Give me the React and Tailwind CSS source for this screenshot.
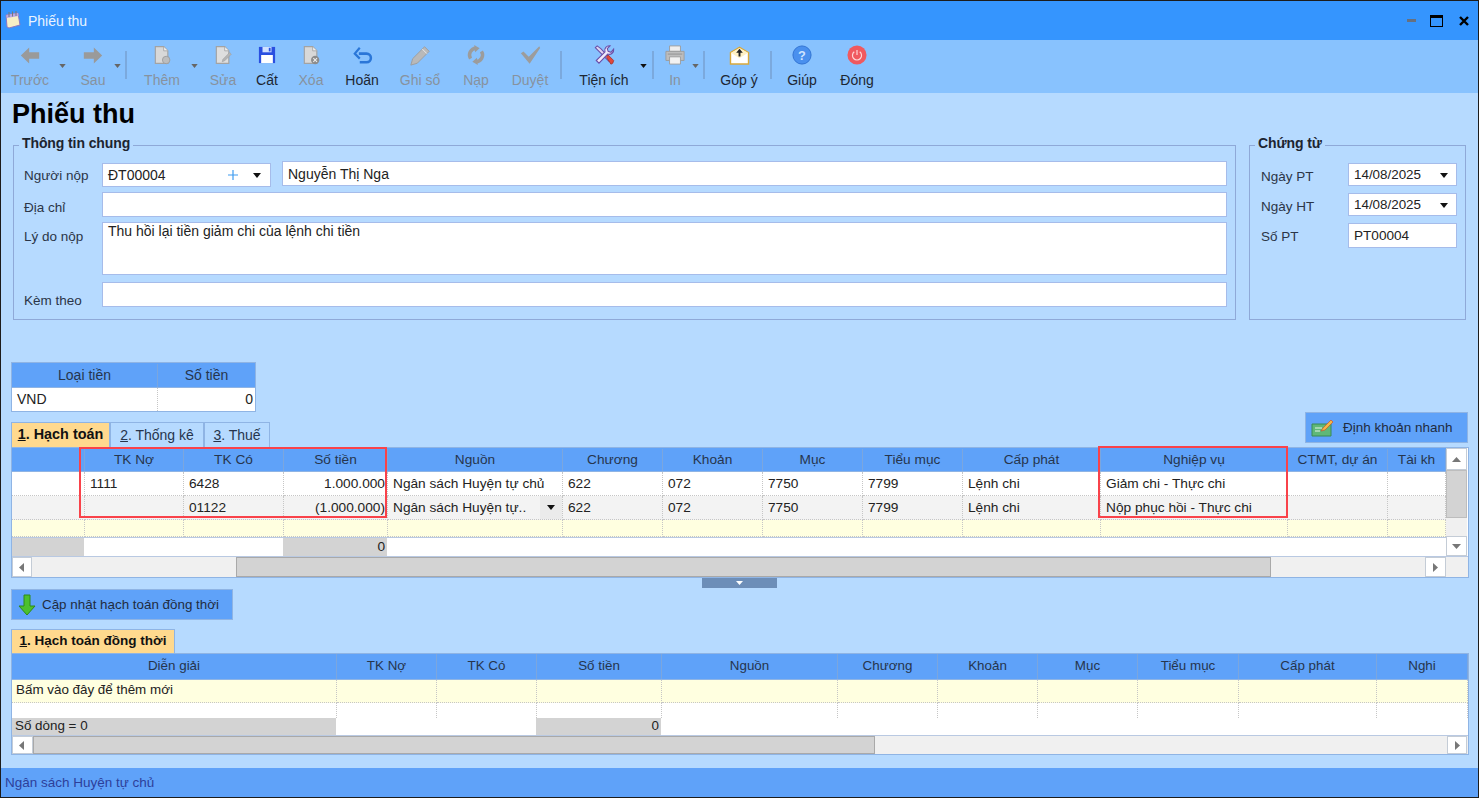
const F = { fontFamily: '"Liberation Sans", Arial, sans-serif' };

const Caret = ({ dark, small }) => (
  <svg width={small ? 7 : 8} height={small ? 4 : 5} viewBox="0 0 8 5"><path d="M0 0h8L4 5z" fill={dark ? "#111" : "#666"} /></svg>
);

const doc = "M4 2h10l5 5v15H4z";
const I = {
  back: <svg width="20" height="19" viewBox="0 0 24 24" preserveAspectRatio="none"><path d="M1 12 11 2v6h12v8H11v6z" fill="#9a9a9a" /></svg>,
  next: <svg width="20" height="19" viewBox="0 0 24 24" preserveAspectRatio="none"><path d="M23 12 13 2v6H1v8h12v6z" fill="#9a9a9a" /></svg>,
  add: <svg width="20" height="20" viewBox="0 0 24 24"><path d={doc} fill="#d8d8d8" stroke="#a3a3a3" strokeWidth="1.4" /><path d="M14 2v5h5" fill="#f0f0f0" stroke="#a3a3a3" /><circle cx="17" cy="18" r="4.5" fill="#bdbdbd" stroke="#9a9a9a" /></svg>,
  edit: <svg width="20" height="20" viewBox="0 0 24 24"><path d={doc} fill="#dedede" stroke="#a3a3a3" strokeWidth="1.4" /><path d="M14 2v5h5" fill="#f0f0f0" stroke="#a3a3a3" /><path d="m11 20 1-3 8-8 2 2-8 8z" fill="#b5b5b5" stroke="#999" strokeWidth=".6" /></svg>,
  save: <svg width="18" height="18" viewBox="0 0 20 20"><path d="M1 1h18v18H1z" fill="#2a4fe0" /><path d="M5 1h10v6H5z" fill="#cfe0ff" /><path d="M12 2h2v4h-2z" fill="#2a4fe0" /><path d="M3.500 10h13v9h-13z" fill="#fff" /></svg>,
  del: <svg width="20" height="20" viewBox="0 0 24 24"><path d={doc} fill="#d8d8d8" stroke="#a3a3a3" strokeWidth="1.4" /><path d="M14 2v5h5" fill="#f0f0f0" stroke="#a3a3a3" /><circle cx="17" cy="18" r="5" fill="#8c8c8c" /><path d="m14.800 15.800 4.400 4.400m0-4.400-4.400 4.400" stroke="#eee" strokeWidth="1.300" /></svg>,
  undo: <svg width="21" height="20" viewBox="0 0 22 22" fill="none"><path d="M7 9.500h8.500a4.500 4.500 0 0 1 0 9.500H8" stroke="#2a76d8" strokeWidth="2.800" /><path d="M8 3 2.500 9.500 8 15" stroke="#2a76d8" strokeWidth="2.400" /></svg>,
  pencil: <svg width="22" height="22" viewBox="0 0 24 24"><path d="m2 23 2-7L17 3l5 5L9 21z" fill="#b9b9b9" stroke="#9c9c9c" /><path d="m14.500 5.500 5 5" stroke="#eee" /></svg>,
  reload: <svg width="20" height="20" viewBox="0 0 22 22" fill="none" stroke="#9c9c9c" strokeWidth="3.800"><path d="M5 15a7.500 7.500 0 0 1 6-11.500" /><path d="M17 7a7.500 7.500 0 0 1-6 11.500" /><path d="M9 0 15 3.500 10 8z" fill="#9c9c9c" stroke="none" /><path d="M13 22 7 18.500 12 14z" fill="#9c9c9c" stroke="none" /></svg>,
  check: <svg width="21" height="18" viewBox="0 0 24 20"><path d="M1 8 4 6l6 6L22 0l1 2-12 18z" fill="#9c9c9c" /></svg>,
  tools: <svg width="23" height="22" viewBox="0 0 24 24"><path d="m2 4 2-2 4 3 11 12-2 2L6 8z" fill="#dfd9f3" stroke="#6a4ea8" strokeWidth="1.100" /><path d="m14 14 2-2 6 6-1 3-2 1z" fill="#e0483c" stroke="#9f2a22" strokeWidth=".8" /><path d="M22 5.500a5 5 0 0 1-6.500 5.500L6 21l-3-3 9.500-9.500A5 5 0 0 1 18 2l-3 3 1 3 3 1z" fill="#efeafb" stroke="#6a4ea8" strokeWidth="1.200" /></svg>,
  print: <svg width="20" height="20" viewBox="0 0 22 22"><path d="M5 1h12v6H5z" fill="#eee" stroke="#9c9c9c" /><path d="M1 7h20v10H1z" fill="#bdbdbd" stroke="#9c9c9c" /><path d="M5 13h12v8H5z" fill="#f2f2f2" stroke="#9c9c9c" /><path d="M3 10h16" stroke="#8e8e8e" /></svg>,
  mail: <svg width="21" height="19" viewBox="0 0 22 20"><path d="M1.500 7 11 1.500 20.500 7v12h-19z" fill="#fff" stroke="#d9a93c" strokeWidth="1.500" /><path d="M2 7 11 2l9 5-9 6z" fill="#fff1c4" /><path d="M11 3 7.500 7H10v4h2V7h2.500z" fill="#222" /></svg>,
  help: <svg width="20" height="20" viewBox="0 0 22 22"><circle cx="11" cy="11" r="10" fill="#4a90ee" stroke="#2e6fd0" /><text x="11" y="16" textAnchor="middle" fontSize="14" fontWeight="700" fill="#cfe4ff" style={F}>?</text></svg>,
  power: <svg width="20" height="20" viewBox="0 0 22 22" fill="none"><circle cx="11" cy="11" r="10.500" fill="#f0595f" /><path d="M8 7.500a5 5 0 1 0 6 0" stroke="#ffd5d6" strokeWidth="1.300" /><path d="M11 5.500v5.500" stroke="#ffd5d6" strokeWidth="1.300" /></svg>,
};

function Tool({ cls, icon, label, on, caret, dark }) {
  return (
    <div className={`relative flex flex-col items-center shrink-0 ${cls}`}>
      <div className="h-[30px] flex items-center justify-center">{icon}</div>
      <div className={`mt-[2px] text-[14px] leading-[16px] whitespace-nowrap ${on ? "text-[#1d2733]" : "text-[#87929f]"}`}>{label}</div>
      {caret && <div className={`absolute top-[24px] flex ${caret}`}><Caret dark={dark} small /></div>}
    </div>
  );
}
const Sep = ({ cls }) => <div className={`w-[2px] h-[28px] mt-[11px] bg-[#7ba9dd] shrink-0 ${cls}`} />;

const Field = ({ cls, children }) => (
  <div className={`bg-white border border-[#a6bcea] text-[#222] px-[5px] flex items-center shrink-0 ${cls}`}>{children}</div>
);
const Label = ({ cls, children }) => <div className={`text-[13.500px] leading-[16px] text-[#2b3547] shrink-0 ${cls}`}>{children}</div>;

const Arrow = ({ d, cls }) => (
  <div className={`bg-white border border-[#c4ccd6] flex items-center justify-center shrink-0 ${cls}`}>
    <svg width="9" height="9" viewBox="0 0 9 9"><path d={d} fill="#777" /></svg>
  </div>
);

const Cell = ({ cls, children, right }) => (
  <div className={`shrink-0 h-full pl-[5px] flex items-center border-r border-b border-dotted border-[#c6c6c6] whitespace-nowrap overflow-hidden ${right ? "justify-end pr-[2px]" : "pr-[5px]"} ${cls}`}>{children}</div>
);

const top = ["w-[73px]", "w-[99px]", "w-[100px]", "w-[104px]", "w-[175px]", "w-[100px]", "w-[100px]", "w-[100px]", "w-[100px]", "w-[138px]", "w-[187px]", "w-[100px]", "w-[58px]"];
const topHead = ["", "TK Nợ", "TK Có", "Số tiền", "Nguồn", "Chương", "Khoản", "Mục", "Tiểu mục", "Cấp phát", "Nghiệp vụ", "CTMT, dự án", "Tài kh"];
const r1 = ["", "1111", "6428", "1.000.000", "Ngân sách Huyện tự chủ", "622", "072", "7750", "7799", "Lệnh chi", "Giảm chi - Thực chi", "", ""];
const r2 = ["", "", "01122", "(1.000.000)", "Ngân sách Huyện tự..", "622", "072", "7750", "7799", "Lệnh chi", "Nộp phục hồi - Thực chi", "", ""];

const bot = ["w-[325px]", "w-[100px]", "w-[100px]", "w-[125px]", "w-[176px]", "w-[100px]", "w-[100px]", "w-[100px]", "w-[101px]", "w-[138px]", "w-[91px]"];
const botHead = ["Diễn giải", "TK Nợ", "TK Có", "Số tiền", "Nguồn", "Chương", "Khoản", "Mục", "Tiểu mục", "Cấp phát", "Nghi"];

const Head = ({ w, labels, h }) => (
  <div className={`flex bg-[#5fa2f9] border-b border-[#8fb4e4] text-[#26354d] ${h}`}>
    {labels.map((t, i) => (
      <div key={i} className={`shrink-0 h-full flex items-center justify-center border-r border-[#7ba6de] overflow-hidden whitespace-nowrap ${w[i]}`}>{t}</div>
    ))}
  </div>
);

const Tab = ({ cls, n, rest, on }) => (
  <div className={`h-[25px] flex items-center justify-center shrink-0 border border-b-0 border-[#8fb4e4] ${on ? "bg-[#ffd98e] font-bold text-[#111]" : "bg-[#b6daff] text-[#26354d]"} ${cls}`}>
    <span className="underline">{n}</span>{rest}
  </div>
);

export default function App() {
  return (
    <div className="w-[1481px] h-[799px] bg-white overflow-hidden" style={F}>
      <div className="w-[1479px] h-[798px] border border-[#1c1c1c] flex flex-col bg-[#b6daff]">
        {/* title bar */}
        <div className="h-[39px] bg-[#3595fe] flex items-center shrink-0 pl-[4px]">
          <svg width="16" height="18" viewBox="0 0 16 18" className="mb-[1px]">
            <path d="M1 4 13 2l2 12-11 3-2-1z" fill="#f6eec6" stroke="#8a77c4" />
            <path d="M1.500 4 13 2l.5 3-11.500 2z" fill="#b9a7e6" />
            <path d="M4 1v5M7.500 .5v5M11 0v5" stroke="#777" strokeWidth="1" />
          </svg>
          <span className="ml-[7px] text-[14px] text-[#eaf4ff] leading-none">Phiếu thu</span>
          <div className="ml-auto flex items-center pr-[9px]">
            <div className="w-[9px] h-[3px] bg-[#67707f]" />
            <div className="ml-[14px] w-[13px] h-[12px] border border-black border-t-[3px]" />
            <svg width="10" height="10" viewBox="0 0 10 10" className="ml-[16px]"><path d="m1 1 8 8m0-8-8 8" stroke="#000" strokeWidth="2.400" /></svg>
          </div>
        </div>

        {/* toolbar */}
        <div className="h-[53px] bg-[#88c2fe] flex items-start shrink-0 pl-[3px]">
          <Tool cls="w-[52px]" icon={I.back} label="Trước" caret="left-[55px]" />
          <Tool cls="w-[44px] ml-[15px]" icon={I.next} label="Sau" caret="left-[43px]" />
          <Sep cls="ml-[10px]" />
          <Tool cls="w-[50px] ml-[10px]" icon={I.add} label="Thêm" caret="left-[54px]" />
          <Tool cls="w-[40px] ml-[16px]" icon={I.edit} label="Sửa" />
          <Tool cls="w-[40px] ml-[4px]" icon={I.save} label="Cất" on />
          <Tool cls="w-[40px] ml-[4px]" icon={I.del} label="Xóa" />
          <Tool cls="w-[48px] ml-[7px]" icon={I.undo} label="Hoãn" on />
          <Tool cls="w-[52px] ml-[8px]" icon={I.pencil} label="Ghi sổ" />
          <Tool cls="w-[44px] ml-[8px]" icon={I.reload} label="Nạp" />
          <Tool cls="w-[48px] ml-[8px]" icon={I.check} label="Duyệt" />
          <Sep cls="ml-[6px]" />
          <Tool cls="w-[60px] ml-[12px]" icon={I.tools} label="Tiện ích" on caret="left-[66px]" dark />
          <Sep cls="ml-[18px]" />
          <Tool cls="w-[30px] ml-[6px]" icon={I.print} label="In" caret="left-[32px]" />
          <Sep cls="ml-[13px]" />
          <Tool cls="w-[50px] ml-[9px]" icon={I.mail} label="Góp ý" on />
          <Sep cls="ml-[6px]" />
          <Tool cls="w-[40px] ml-[10px]" icon={I.help} label="Giúp" on />
          <Tool cls="w-[44px] ml-[13px]" icon={I.power} label="Đóng" on />
        </div>

        {/* content */}
        <div className="flex-1 min-h-0 flex flex-col">
          <div className="h-[42px] pl-[11px] pt-[5px] shrink-0 text-[27px] leading-[32px] font-bold text-black">Phiếu thu</div>

          <div className="flex shrink-0 pl-[12px] text-[14px]">
            <fieldset className="w-[1223px] h-[185px] border border-[#8fa9d8] min-w-0 pl-[10px] pb-0">
              <legend className="-ml-[5px] px-[3px] pb-[4px] text-[14px] tracking-[-0.1px] leading-[16px] font-bold text-[#1c2430]">Thông tin chung</legend>
              <div className="flex mt-[6px]">
                <Label cls="w-[78px] pt-[7px]">Người nộp</Label>
                <Field cls="w-[169px] h-[24px] mt-[2px] pr-[9px] justify-between">
                  <span>ĐT00004</span>
                  <span className="flex items-center">
                    <svg width="10" height="10" viewBox="0 0 10 10"><path d="M5 0v10M0 5h10" stroke="#3f9cf0" strokeWidth="1.200" /></svg>
                    <span className="ml-[15px] flex"><Caret dark /></span>
                  </span>
                </Field>
                <Field cls="w-[945px] h-[25px] ml-[11px] pt-[2px]">Nguyễn Thị Nga</Field>
              </div>
              <div className="flex mt-[5px]">
                <Label cls="w-[78px] pt-[8px]">Địa chỉ</Label>
                <Field cls="w-[1125px] h-[25px]" />
              </div>
              <div className="flex mt-[5px]">
                <Label cls="w-[78px] pt-[7px]">Lý do nộp</Label>
                <Field cls="w-[1125px] h-[53px] !items-start leading-[16px]">Thu hồi lại tiền giảm chi của lệnh chi tiền</Field>
              </div>
              <div className="flex mt-[7px]">
                <Label cls="w-[78px] pt-[11px]">Kèm theo</Label>
                <Field cls="w-[1125px] h-[25px]" />
              </div>
            </fieldset>

            <fieldset className="w-[217px] h-[185px] ml-[13px] border border-[#8fa9d8] min-w-0 pl-[11px]">
              <legend className="-ml-[6px] px-[3px] pb-[4px] text-[14px] tracking-[-0.1px] leading-[16px] font-bold text-[#1c2430]">Chứng từ</legend>
              <div className="flex mt-[8px]">
                <Label cls="w-[87px] pt-[6px]">Ngày PT</Label>
                <Field cls="w-[109px] h-[23px] pr-[8px] pt-[2px] justify-between text-[13.400px]"><span>14/08/2025</span><Caret dark /></Field>
              </div>
              <div className="flex mt-[7px]">
                <Label cls="w-[87px] pt-[6px]">Ngày HT</Label>
                <Field cls="w-[109px] h-[23px] pr-[8px] pt-[2px] justify-between text-[13.400px]"><span>14/08/2025</span><Caret dark /></Field>
              </div>
              <div className="flex mt-[7px]">
                <Label cls="w-[87px] pt-[6px]">Số PT</Label>
                <Field cls="w-[109px] h-[25px] pt-[2px] text-[13.600px]">PT00004</Field>
              </div>
            </fieldset>
          </div>

          {/* currency */}
          <div className="ml-[10px] mt-[42px] w-[245px] h-[50px] shrink-0 border border-[#8fb4e4] text-[14px]">
            <div className="flex h-[25px] pt-[1px] bg-[#5fa2f9] text-[#26354d] border-b border-[#8fb4e4]">
              <div className="w-[146px] flex items-center justify-center border-r border-[#7ba6de]">Loại tiền</div>
              <div className="flex-1 flex items-center justify-center">Số tiền</div>
            </div>
            <div className="flex h-[23px] bg-white text-[#222]">
              <div className="w-[146px] flex items-center pl-[5px] border-r border-dotted border-[#c6c6c6]">VND</div>
              <div className="flex-1 flex items-center justify-end pr-[2px]">0</div>
            </div>
          </div>

          {/* tabs + quick button */}
          <div className="h-[35px] flex justify-between shrink-0 pl-[10px] pr-[10px] text-[14px]">
            <div className="flex self-end">
              <Tab cls="w-[99px] text-[14.400px]" n="1" rest=". Hạch toán" on />
              <Tab cls="w-[94px]" n="2" rest=". Thống kê" />
              <Tab cls="w-[66px]" n="3" rest=". Thuế" />
            </div>
            <div className="w-[163px] h-[31px] bg-[#5fa2f9] border border-[#8fb4e4] flex items-center pl-[5px] pt-[1px] text-[13.500px] text-[#1f2c40]">
              <svg width="22" height="18" viewBox="0 0 22 18">
                <path d="M1 5h19v12H1z" fill="#5fb878" stroke="#3a8a55" />
                <path d="M4 9h7M4 12h5" stroke="#e6f6ea" />
                <path d="m10 12 2-3 8-8 2 2-8 8z" fill="#f2b845" stroke="#c9512f" strokeWidth=".7" />
              </svg>
              <span className="ml-[10px]">Định khoản nhanh</span>
            </div>
          </div>

          {/* grid 1 */}
          <div className="relative ml-[10px] w-[1458px] h-[131px] shrink-0 border border-[#8fb4e4] bg-white text-[13.700px] text-[#222]">
            <div className="flex h-[108px]">
              <div className="w-[1434px] shrink-0 overflow-hidden flex flex-col">
                <Head w={top} labels={topHead} h="h-[24px] pt-[1px]" />
                <div className="flex h-[24px] bg-white">
                  {r1.map((t, i) => <Cell key={i} cls={`${top[i]} pt-[1px]`} right={i === 3}>{t}</Cell>)}
                </div>
                <div className="flex h-[24px] bg-[#f3f3f3]">
                  {r2.map((t, i) => (
                    <Cell key={i} cls={`${top[i]} pt-[1px] ${i === 4 ? "relative" : ""}`} right={i === 3}>
                      {t}
                      {i === 4 && <span className="absolute right-0 top-0 w-[22px] h-full bg-[#ebebeb] flex items-center justify-center"><Caret dark /></span>}
                    </Cell>
                  ))}
                </div>
                <div className="flex h-[17px] bg-[#ffffe0]">
                  {top.map((w, i) => <Cell key={i} cls={w} />)}
                </div>
                <div className="h-[1px] bg-[#b9c9e2] shrink-0" />
                <div className="flex h-[18px] shrink-0">
                  <div className="w-[72px] bg-[#d3d3d3]" />
                  <div className="w-[199px] bg-white" />
                  <div className="w-[104px] bg-[#d3d3d3] flex items-center justify-end pr-[2px]">0</div>
                  <div className="flex-1 bg-white" />
                </div>
              </div>
              <div className="w-[21px] shrink-0 bg-[#f0f0f0] flex flex-col">
                <Arrow cls="h-[22px]" d="M4.500 2 9 7H0z" />
                <div className="h-[48px] bg-[#d3d3d3] border border-[#bdbdbd]" />
                <div className="flex-1" />
                <Arrow cls="h-[20px]" d="M0 2h9L4.500 7z" />
              </div>
            </div>
            <div className="flex h-[21px] bg-[#f0f0f0] border-t border-[#b9c9e2]">
              <Arrow cls="w-[20px]" d="M6 0v9L1 4.500z" />
              <div className="w-[204px] shrink-0" />
              <div className="w-[1035px] shrink-0 bg-[#d3d3d3] border border-[#a9a9a9]" />
              <div className="w-[154px] shrink-0" />
              <Arrow cls="w-[21px]" d="M2 0v9l5-4.500z" />
            </div>

            <div className="absolute left-[67px] -top-[1px] w-[308px] h-[71px] border-2 border-[#f9424a] pointer-events-none" />
            <div className="absolute left-[1086px] -top-[2px] w-[190px] h-[72px] border-2 border-[#f9424a] pointer-events-none" />
          </div>

          {/* splitter */}
          <div className="h-[10px] shrink-0 flex justify-center">
            <div className="w-[75px] h-[10px] bg-[#6d8eb8] flex items-center justify-center">
              <svg width="7" height="4" viewBox="0 0 7 4"><path d="M0 0h7L3.500 4z" fill="#fff" /></svg>
            </div>
          </div>

          {/* update button */}
          <div className="ml-[10px] mt-[1px] w-[222px] h-[31px] shrink-0 bg-[#5fa2f9] border border-[#8fb4e4] flex items-center pl-[5px] pt-[1px] text-[13.400px] text-[#1f2c40]">
            <svg width="20" height="22" viewBox="0 0 20 22"><path d="M7 1h6v11h5l-8 9-8-9h5z" fill="#4cc02d" stroke="#2f8a18" /></svg>
            <span className="ml-[5px]">Cập nhật hạch toán đồng thời</span>
          </div>

          {/* grid 2 */}
          <Tab cls="!h-[24px] w-[164px] ml-[10px] mt-[9px] text-[13.500px]" n="1" rest=". Hạch toán đồng thời" on />
          <div className="ml-[10px] w-[1458px] h-[102px] shrink-0 border border-[#8fb4e4] bg-white text-[13.400px] text-[#222] flex flex-col">
            <Head w={bot} labels={botHead} h="h-[26px] shrink-0" />
            <div className="flex h-[23px] shrink-0 bg-[#ffffe0]">
              {bot.map((w, i) => <Cell key={i} cls={`${w} !pl-[4px] pb-[1px]`}>{i === 0 ? "Bấm vào đây để thêm mới" : ""}</Cell>)}
            </div>
            <div className="flex h-[15px] shrink-0 bg-white">
              {bot.map((w, i) => <div key={i} className={`shrink-0 border-r border-dotted border-[#c6c6c6] ${w}`} />)}
            </div>
            <div className="flex h-[17px] shrink-0">
              <div className="w-[324px] bg-[#d3d3d3] flex items-center pl-[3px] pb-[1px]">Số dòng = 0</div>
              <div className="w-[200px] bg-white" />
              <div className="w-[125px] bg-[#d3d3d3] flex items-center justify-end pr-[2px] pb-[1px]">0</div>
              <div className="flex-1 bg-white" />
            </div>
            <div className="flex flex-1 bg-[#f0f0f0] border-t border-[#b9c9e2]">
              <Arrow cls="w-[21px]" d="M6 0v9L1 4.500z" />
              <div className="w-[842px] shrink-0 bg-[#d3d3d3] border border-[#a9a9a9]" />
              <div className="flex-1" />
              <Arrow cls="w-[20px] mr-[1px]" d="M2 0v9l5-4.500z" />
            </div>
          </div>
          <div className="flex-1" />
        </div>

        {/* status */}
        <div className="h-[29px] bg-[#5fa2f9] flex items-center pl-[4px] pt-[1px] shrink-0 text-[13.500px] text-[#2d3f9a]">Ngân sách Huyện tự chủ</div>
      </div>
    </div>
  );
}
